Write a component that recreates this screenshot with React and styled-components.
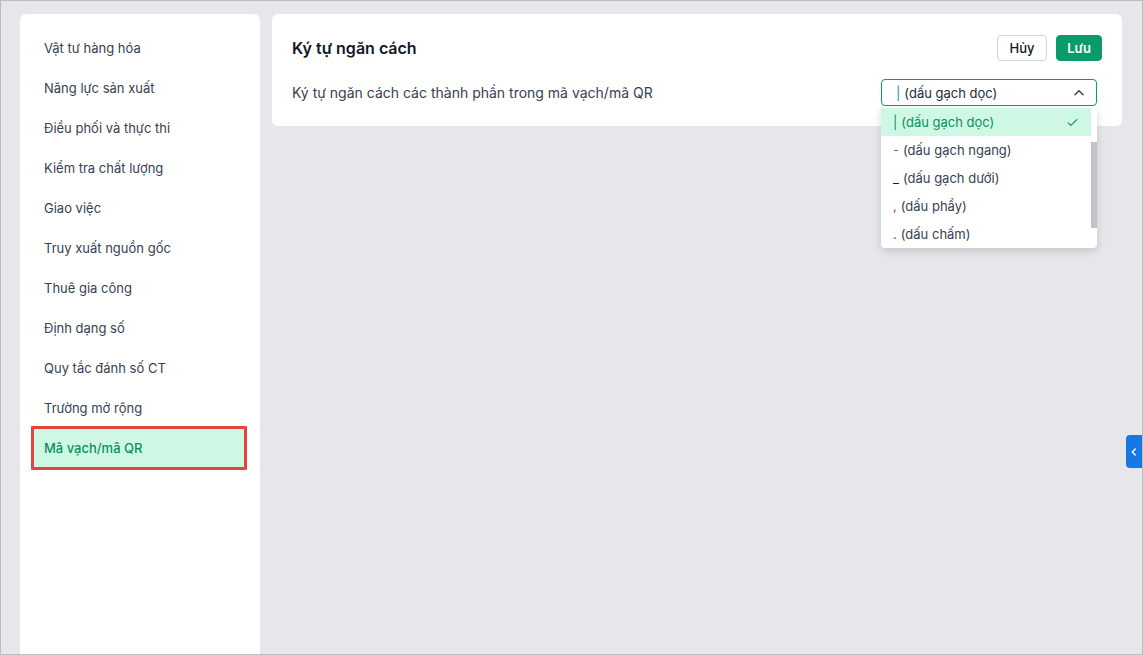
import React from "react";
import styled, { createGlobalStyle } from "styled-components";

const Global = createGlobalStyle`
  html, body { margin: 0; padding: 0; }
  body {
    font-family: Inter, "Noto Sans", sans-serif;
    background: #e5e7eb;
    color: #374151;
  }
  * { box-sizing: border-box; }
`;

const Frame = styled.div`
  position: relative;
  width: 1143px;
  height: 655px;
  overflow: hidden;
  border: 1px solid #bdbdbd;
  background: #e5e7eb;
  display: grid;
  grid-template-columns: 240px 1fr;
  column-gap: 12px;
  padding: 13px 20px 0 19px;
  align-items: start;
`;

const Sidebar = styled.nav`
  background: #fff;
  border-radius: 6px 6px 0 0;
  height: 660px;
  padding: 14px 16px 14px 14px;
  display: flex;
  flex-direction: column;
`;

const NavItem = styled.div`
  height: 40px;
  display: flex;
  align-items: center;
  padding-left: 10px;
  font-size: 13px;
  color: ${(p) => (p.$active ? "#0a8f63" : "#374151")};
  font-weight: ${(p) => (p.$active ? 500 : 400)};
  background: ${(p) => (p.$active ? "#cff8e4" : "transparent")};
  position: relative;
  ${(p) =>
    p.$active &&
    `
    &::after {
      content: "";
      position: absolute;
      inset: -2px -3px -2px -3px;
      border: 3px solid #e5453f;
      border-radius: 1px;
    }
  `}
`;

const Main = styled.main`
  display: flex;
  flex-direction: column;
`;

const Card = styled.section`
  background: #fff;
  border-radius: 6px;
  padding: 21px 20px 20px 20px;
  display: flex;
  flex-direction: column;
  gap: 18px;
  height: 112px;
`;

const Row = styled.div`
  display: flex;
  align-items: center;
  justify-content: space-between;
`;

const Title = styled.h2`
  margin: 0;
  font-size: 16px;
  font-weight: 600;
  color: #111827;
`;

const Actions = styled.div`
  display: flex;
  gap: 9px;
`;

const Button = styled.button`
  height: 26px;
  width: ${(p) => (p.$primary ? "46px" : "50px")};
  padding: 0;
  font-family: inherit;
  font-size: 13px;
  font-weight: ${(p) => (p.$primary ? 600 : 500)};
  border-radius: 4px;
  border: 1px solid ${(p) => (p.$primary ? "#0b9a6a" : "#d1d5db")};
  background: ${(p) => (p.$primary ? "#0b9a6a" : "#fff")};
  color: ${(p) => (p.$primary ? "#fff" : "#111827")};
`;

const Label = styled.span`
  font-size: 14px;
  color: #374151;
`;

const SelectWrap = styled.div`
  position: relative;
  width: 216px;
  margin-right: 5px;
`;

const SelectBox = styled.div`
  height: 27px;
  border: 1px solid #0b9a6a;
  border-radius: 4px;
  display: flex;
  align-items: center;
  justify-content: space-between;
  padding: 0 10px 0 14px;
  font-size: 13px;
  color: #1f2937;
`;

const Sep = styled.span`
  color: ${(p) => p.$color || "inherit"};
  margin-right: 4px;
`;

const Menu = styled.ul`
  position: absolute;
  top: 29px;
  left: 0;
  width: 216px;
  margin: 0;
  padding: 0;
  list-style: none;
  background: #fff;
  border-radius: 0 0 4px 4px;
  box-shadow: 0 3px 8px rgba(0, 0, 0, 0.15);
  height: 140px;
  overflow: hidden;
  z-index: 5;
`;

const Option = styled.li`
  height: 28px;
  display: flex;
  align-items: center;
  justify-content: space-between;
  padding: 0 12px 0 12px;
  margin-right: ${(p) => (p.$selected ? "6px" : "0")};
  font-size: 13px;
  color: ${(p) => (p.$selected ? "#0a8f63" : "#374151")};
  background: ${(p) => (p.$selected ? "#cff8e4" : "transparent")};
`;

const Scrollbar = styled.div`
  position: absolute;
  right: 0;
  top: 34px;
  width: 6px;
  height: 86px;
  background: #c1c3c7;
`;

const SideTab = styled.div`
  position: absolute;
  right: 0;
  top: 434px;
  width: 16px;
  height: 33px;
  background: #1677e5;
  border-radius: 4px 0 0 4px;
  display: flex;
  align-items: center;
  justify-content: center;
`;

const navItems = [
  "Vật tư hàng hóa",
  "Năng lực sản xuất",
  "Điều phối và thực thi",
  "Kiểm tra chất lượng",
  "Giao việc",
  "Truy xuất nguồn gốc",
  "Thuê gia công",
  "Định dạng số",
  "Quy tắc đánh số CT",
  "Trường mở rộng",
  "Mã vạch/mã QR",
];

const options = [
  { sep: "|", label: "(dấu gạch dọc)", selected: true },
  { sep: "-", label: "(dấu gạch ngang)", color: "#6b7280" },
  { sep: "_", label: "(dấu gạch dưới)", color: "#111827" },
  { sep: ",", label: "(dấu phẩy)", color: "#c2410c" },
  { sep: ".", label: "(dấu chấm)", color: "#c2410c" },
];

export default function App() {
  return (
    <>
      <Global />
      <Frame>
        <Sidebar>
          {navItems.map((n, i) => (
            <NavItem key={n} $active={i === navItems.length - 1}>
              {n}
            </NavItem>
          ))}
        </Sidebar>
        <Main>
          <Card>
            <Row>
              <Title>Ký tự ngăn cách</Title>
              <Actions>
                <Button>Hủy</Button>
                <Button $primary>Lưu</Button>
              </Actions>
            </Row>
            <Row>
              <Label>Ký tự ngăn cách các thành phần trong mã vạch/mã QR</Label>
              <SelectWrap>
                <SelectBox>
                  <span>
                    <Sep $color="#1a8fb0">|</Sep>(dấu gạch dọc)
                  </span>
                  <svg width="14" height="14" viewBox="0 0 24 24" fill="none" stroke="#374151" strokeWidth="2.4" strokeLinecap="round" strokeLinejoin="round">
                    <path d="M5 15l7-7 7 7" />
                  </svg>
                </SelectBox>
                <Menu>
                  {options.map((o) => (
                    <Option key={o.label} $selected={o.selected}>
                      <span>
                        <Sep $color={o.color}>{o.sep}</Sep>
                        {o.label}
                      </span>
                      {o.selected && (
                        <svg width="13" height="13" viewBox="0 0 24 24" fill="none" stroke="#0a8f63" strokeWidth="2" strokeLinecap="round" strokeLinejoin="round">
                          <path d="M4 12.5l5 5L20 6.5" />
                        </svg>
                      )}
                    </Option>
                  ))}
                  <Scrollbar />
                </Menu>
              </SelectWrap>
            </Row>
          </Card>
        </Main>
        <SideTab>
          <svg width="10" height="12" viewBox="0 0 24 24" fill="none" stroke="#fff" strokeWidth="3.5" strokeLinecap="round" strokeLinejoin="round">
            <path d="M15 5l-7 7 7 7" />
          </svg>
        </SideTab>
      </Frame>
    </>
  );
}
